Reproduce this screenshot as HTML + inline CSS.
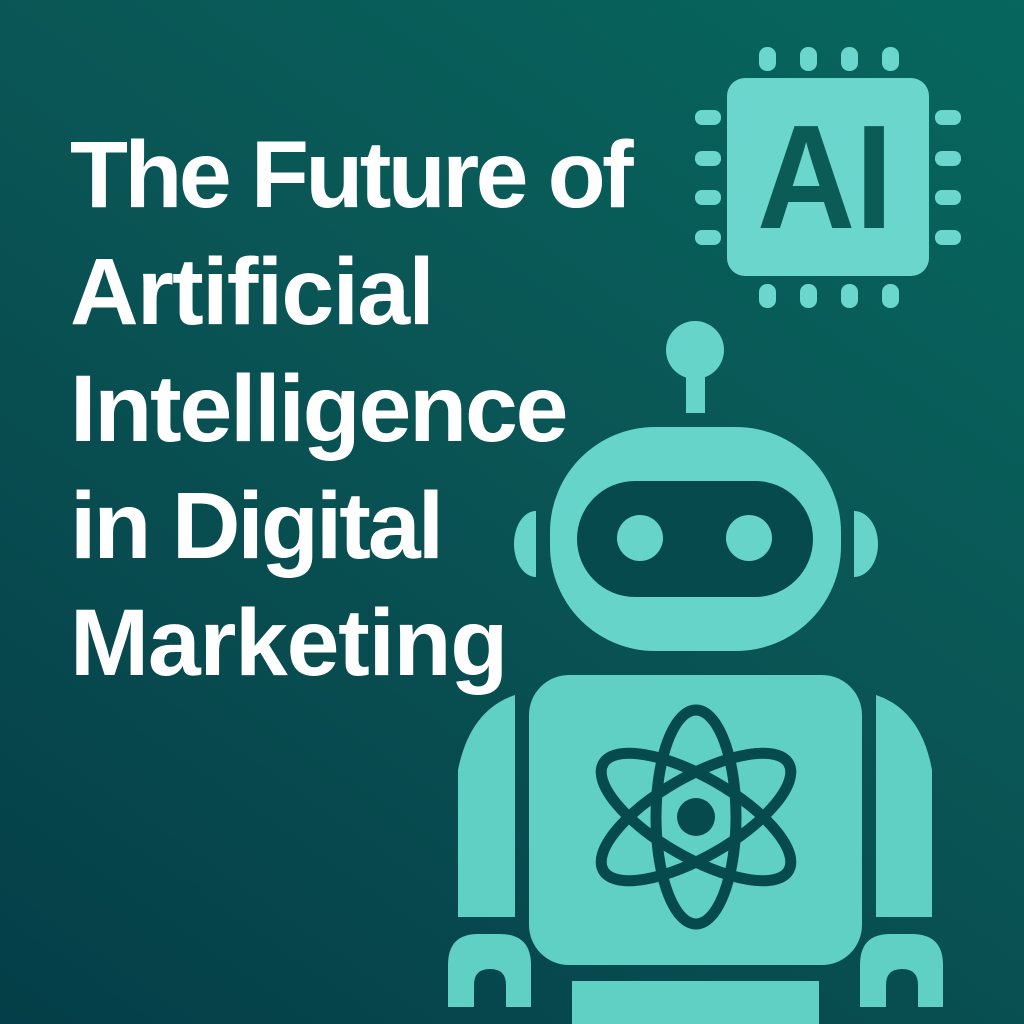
<!DOCTYPE html>
<html><head><meta charset="utf-8"><style>
html,body{margin:0;padding:0}
body{width:1024px;height:1024px;overflow:hidden;position:relative;
background:linear-gradient(215deg,#06675e 0%,#0a5555 45%,#043e48 100%);font-family:"Liberation Sans",sans-serif}
.t{position:absolute;left:70px;top:117px;color:#fff;font-weight:bold;font-size:95px;line-height:117px;margin:0;white-space:nowrap}
.t div{height:117px}
svg{position:absolute;left:0;top:0}
</style></head><body>
<div class="t"><div style="letter-spacing:-3.6px">The Future of</div><div style="letter-spacing:-1.7px">Artificial</div><div style="letter-spacing:-2.2px">Intelligence</div><div style="letter-spacing:-3px">in Digital</div><div style="letter-spacing:-1.3px">Marketing</div></div>
<svg width="1024" height="1024" viewBox="0 0 1024 1024">
<g fill="#6bd6cb">
<rect x="727" y="78" width="202" height="198" rx="18"/>
<rect x="759" y="47" width="17" height="24" rx="8"/><rect x="800" y="47" width="17" height="24" rx="8"/><rect x="841" y="47" width="17" height="24" rx="8"/><rect x="882" y="47" width="17" height="24" rx="8"/>
<rect x="759" y="284" width="17" height="24" rx="8"/><rect x="800" y="284" width="17" height="24" rx="8"/><rect x="841" y="284" width="17" height="24" rx="8"/><rect x="882" y="284" width="17" height="24" rx="8"/>
<rect x="695" y="110" width="26" height="15" rx="7"/><rect x="695" y="151" width="26" height="15" rx="7"/><rect x="695" y="190" width="26" height="15" rx="7"/><rect x="695" y="230" width="26" height="15" rx="7"/>
<rect x="935" y="110" width="26" height="15" rx="7"/><rect x="935" y="151" width="26" height="15" rx="7"/><rect x="935" y="190" width="26" height="15" rx="7"/><rect x="935" y="230" width="26" height="15" rx="7"/>
</g>
<text x="757" y="228" font-family="Liberation Sans,sans-serif" font-weight="bold" font-size="148" fill="#0b5c57" textLength="136" lengthAdjust="spacingAndGlyphs">AI</text>
<g fill="#66d4c9">
<circle cx="695" cy="350" r="29"/>
<rect x="686" y="365" width="19" height="48"/>
<rect x="550" y="427" width="291" height="224" rx="105"/>
<path d="M536 511 A 22 33 0 0 0 536 577 Z"/>
<path d="M854 511 A 24 33 0 0 1 854 577 Z"/>
</g>
<g fill="#60cfc4">
<rect x="529" y="675" width="333" height="290" rx="40"/>
<path d="M515 695 Q470 710 458 770 L458 917 L515 917 Z"/>
<path d="M876 695 Q921 710 932 770 L932 917 L876 917 Z"/>
<path d="M448 1007 L448 965 Q448 934 478 934 L500 934 Q531 934 531 965 L531 1007 L506 1007 L506 985 Q506 969 490 969 Q474 969 474 985 L474 1007 Z"/>
<path d="M860 1007 L860 965 Q860 934 890 934 L912 934 Q943 934 943 965 L943 1007 L918 1007 L918 985 Q918 969 902 969 Q886 969 886 985 L886 1007 Z"/>
<rect x="572" y="981" width="247" height="43"/>
</g>
<rect x="577" y="481" width="236" height="116" rx="58" fill="#064a4d"/>
<g fill="#66d4c9"><circle cx="640" cy="538" r="23"/><circle cx="749" cy="538" r="23"/></g>
<g fill="none" stroke="#064a4d" stroke-width="11">
<ellipse cx="696" cy="817" rx="40" ry="107"/>
<ellipse cx="696" cy="817" rx="40" ry="107" transform="rotate(60 696 817)"/>
<ellipse cx="696" cy="817" rx="40" ry="107" transform="rotate(-60 696 817)"/>
</g>
<circle cx="696" cy="817" r="19" fill="#064a4d"/>
</svg>
</body></html>
